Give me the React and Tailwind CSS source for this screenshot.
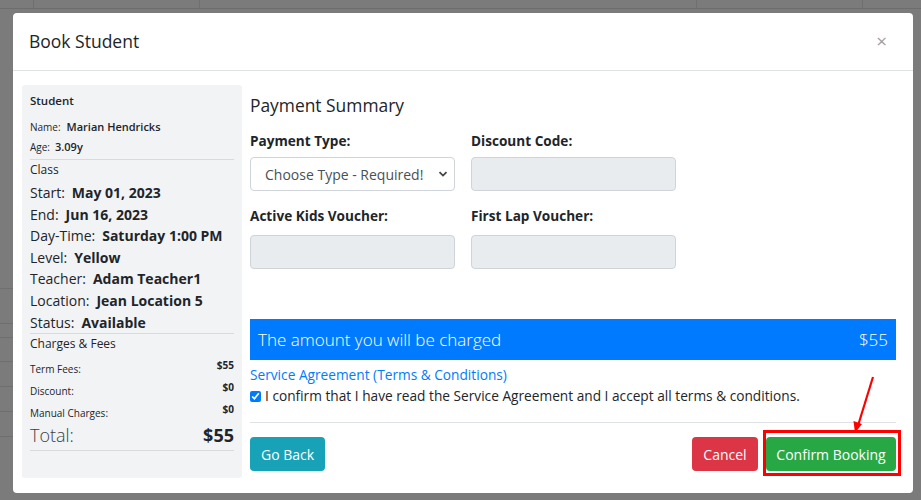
import React from 'react'

const font = { fontFamily: '"Segoe UI", "Open Sans", "Noto Sans", sans-serif' }

function Row({ label, value }) {
  return (
    <div className="flex items-center h-[21.6px] text-[14px] leading-[21.6px]">
      <span className="text-[#212529]">{label}</span>
      <span className="ml-[7px] font-bold text-[#212529]">{value}</span>
    </div>
  )
}

function Fee({ label, value }) {
  return (
    <div className="flex justify-between h-[22px]">
      <span className="text-[10px] leading-[22px] pt-[2px] text-[#212529]">{label}</span>
      <span className="text-[10px] leading-[22px] -mt-[2px] font-bold text-[#212529]">{value}</span>
    </div>
  )
}

function Sidebar() {
  return (
    <div className="w-[220px] h-[393px] bg-[#f2f3f5] rounded-[3px] px-[8px] pt-[7px] text-[#212529]">
      <div className="text-[11.5px] leading-[18px] font-semibold">Student</div>
      <div className="mt-[7px] h-[20px] flex items-center">
        <span className="text-[10px]">Name:</span>
        <span className="ml-[6px] text-[11px] font-semibold">Marian Hendricks</span>
      </div>
      <div className="h-[20px] flex items-center">
        <span className="text-[10px]">Age:</span>
        <span className="ml-[5px] text-[11px] font-semibold">3.09y</span>
      </div>
      <div className="mt-[2px] border-t border-[#d8dade]" />
      <div className="text-[12px] leading-[18px] pt-[1px]">Class</div>
      <div className="mt-[3px]">
        <Row label="Start:" value="May 01, 2023" />
        <Row label="End:" value="Jun 16, 2023" />
        <Row label="Day-Time:" value="Saturday 1:00 PM" />
        <Row label="Level:" value="Yellow" />
        <Row label="Teacher:" value="Adam Teacher1" />
        <Row label="Location:" value="Jean Location 5" />
        <Row label="Status:" value="Available" />
      </div>
      <div className="border-t border-[#d8dade]" />
      <div className="text-[12px] leading-[18px] pt-[1px]">Charges &amp; Fees</div>
      <div className="mt-[3px]">
        <Fee label="Term Fees:" value="$55" />
        <Fee label="Discount:" value="$0" />
        <Fee label="Manual Charges:" value="$0" />
      </div>
      <div className="flex justify-between items-center h-[27px]">
        <span className="text-[18px] font-light text-[#3a3f44]">Total:</span>
        <span className="text-[18px] font-bold">$55</span>
      </div>
      <div className="mt-[1px] border-t border-[#d8dade]" />
    </div>
  )
}

function Field({ label, gap, children }) {
  return (
    <div>
      <div className={`text-[13.6px] leading-[21px] font-bold text-[#212529] ${gap}`}>{label}</div>
      {children}
    </div>
  )
}

function DisabledInput() {
  return <div className="h-[34px] bg-[#e9ecef] border border-[#ced4da] rounded-[4px]" />
}

function PaymentPanel() {
  return (
    <div className="flex-1 pt-[8px]">
      <div className="text-[17.4px] leading-[24px] font-medium text-[#212529]">Payment Summary</div>
      <div className="mt-[13px] grid grid-cols-[205px_205px] gap-x-[16px] gap-y-[14px]">
        <Field label="Payment Type:" gap="mb-[6px]">
          <div className="h-[34px] border border-[#ced4da] rounded-[4px] bg-white flex items-center pl-[14px] pr-[6px]">
            <span className="flex-1 text-[14px] text-[#495057]">Choose Type - Required!</span>
            <svg width="10" height="10" viewBox="0 0 10 10" className="text-[#444]">
              <path d="M1.5 3.2 L5 6.6 L8.5 3.2" fill="none" stroke="currentColor" strokeWidth="1.8" />
            </svg>
          </div>
        </Field>
        <Field label="Discount Code:" gap="mb-[6px]">
          <DisabledInput />
        </Field>
        <Field label="Active Kids Voucher:" gap="mb-[9px]">
          <DisabledInput />
        </Field>
        <Field label="First Lap Voucher:" gap="mb-[9px]">
          <DisabledInput />
        </Field>
      </div>

      <div className="mt-[50px] h-[41px] bg-[#007bff] flex items-center justify-between px-[8px] text-white text-[17px] font-light">
        <span>The amount you will be charged</span>
        <span>$55</span>
      </div>

      <div className="mt-[4px] text-[13.7px] leading-[21px] text-[#007bff]">Service Agreement (Terms &amp; Conditions)</div>
      <label className="flex items-center h-[22px] text-[13.7px] text-[#212529]">
        <input type="checkbox" defaultChecked className="w-[11px] h-[11px] accent-[#007bff] mr-[4px]" />
        I confirm that I have read the Service Agreement and I accept all terms &amp; conditions.
      </label>

      <div className="mt-[15px] border-t border-[#dee2e6]" />

      <div className="mt-[14px] flex justify-between items-start">
        <button className="h-[34px] px-[11px] bg-[#17a2b8] text-white text-[14px] rounded-[4px]">Go Back</button>
        <div className="flex items-start">
          <button className="h-[34px] w-[66px] bg-[#dc3545] text-white text-[14px] rounded-[4px]">Cancel</button>
          <div className="ml-[5px] -mt-[7px] -mr-[5px] border-[3px] border-[#ff0000] pt-[4px] pr-[2px] pb-[2px]">
            <button className="h-[34px] w-[130px] bg-[#28a745] text-white text-[14px] rounded-[4px]">Confirm Booking</button>
          </div>
        </div>
      </div>
    </div>
  )
}

export default function App() {
  return (
    <div className="relative w-[921px] h-[500px] overflow-hidden bg-[#7b7b7b]" style={font}>
      {/* page behind the backdrop */}
      <div className="h-[9px] flex border-b border-[#6d6d6d]">
        <div className="w-[34px] border-r border-[#707070]" />
        <div className="w-[166px] border-r border-[#707070]" />
        <div className="w-[497px] border-r border-[#707070]" />
        <div className="w-[166px] border-r border-[#707070]" />
      </div>
      <div className="mt-[279px] w-[13px] flex flex-col">
        <div className="h-[35px] border-t border-[#6f6f6f]" />
        <div className="h-[14px] border-t border-[#6f6f6f]" />
        <div className="h-[24px] border-t border-[#6f6f6f]" />
        <div className="h-[25px] border-t border-[#6f6f6f]" />
        <div className="h-[25px] border-t border-[#6f6f6f]" />
        <div className="h-[25px] border-t border-[#6f6f6f]" />
        <div className="h-[33px] border-t border-[#6f6f6f]" />
      </div>

      {/* modal */}
      <div className="absolute left-[13px] top-[13px] w-[900px] h-[480px] bg-white rounded-[4px] flex flex-col">
        <div className="h-[58px] border-b border-[#dee2e6] flex items-center justify-between pl-[16px] pr-[26px]">
          <span className="text-[17.5px] text-[#212529]">Book Student</span>
          <span className="text-[19px] leading-none text-[#a0a0a0]">×</span>
        </div>
        <div className="flex gap-[8px] pl-[9px] pr-[17px] pt-[14px]">
          <Sidebar />
          <PaymentPanel />
        </div>
      </div>

      {/* annotation arrow */}
      <svg className="absolute left-0 top-0 pointer-events-none" width="921" height="500">
        <line x1="873" y1="377" x2="858.5" y2="424" stroke="#ff0000" strokeWidth="2.2" />
        <polygon points="855,433 853.5,421 862,424" fill="#ff0000" />
      </svg>
    </div>
  )
}
